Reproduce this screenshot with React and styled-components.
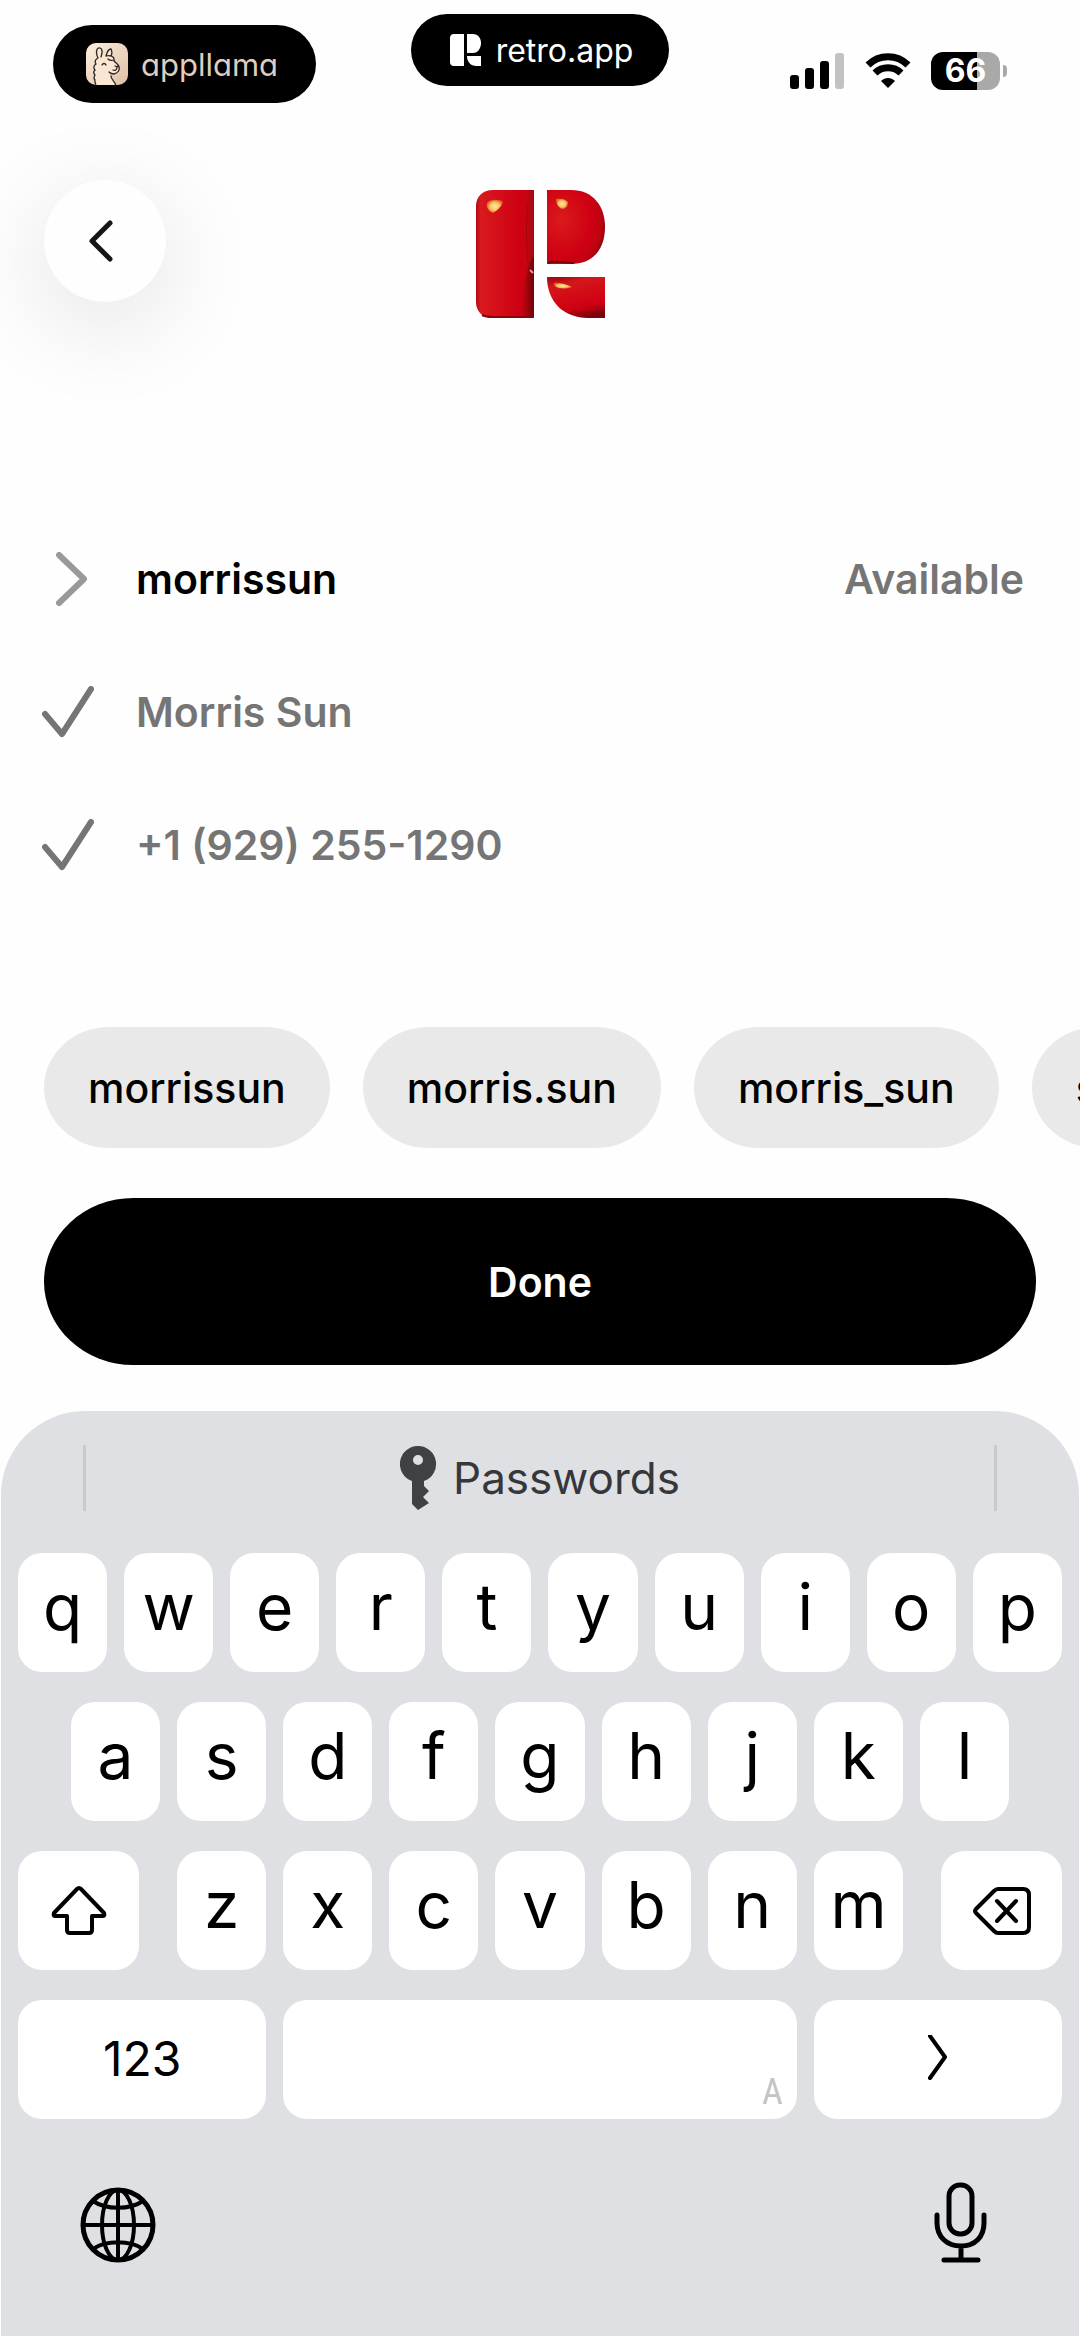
import React, { useState } from "react";
import styled, { createGlobalStyle } from "styled-components";

const suggestions = ["morrissun", "morris.sun", "morris_sun", "sun.morris"];

export default function App() {
  const [username, setUsername] = useState("morrissun");

  const type = (letter) => setUsername(username + letter);

  return (
    <Page>
      <GlobalStyle />
      <StatusBar>
        <BrandPill>
          <LlamaIcon />
          <span>appllama</span>
        </BrandPill>
        <Island>
          <RetroMark />
          <span>retro.app</span>
        </Island>
        <StatusIcons>
          <SignalIcon />
          <WifiIcon />
          <Battery>
            <BatteryLevel>66</BatteryLevel>
            <BatteryNub />
          </Battery>
        </StatusIcons>
      </StatusBar>

      <Nav>
        <BackButton aria-label="Back">
          <svg width="24" height="42" viewBox="0 0 24 42">
            <path d="M21 3L3 21L21 39" fill="none" stroke="#161616" strokeWidth="5" strokeLinecap="round" strokeLinejoin="round" />
          </svg>
        </BackButton>
        <RetroLogo />
      </Nav>

      <Details>
        <Row>
          <PromptIcon />
          <NameInput
            type="text"
            aria-label="Username"
            value={username}
            onChange={(e) => setUsername(e.target.value)}
          />
          <span>Available</span>
        </Row>
        <Row>
          <CheckIcon />
          <span>Morris Sun</span>
        </Row>
        <Row>
          <CheckIcon />
          <span>+1 (929) 255-1290</span>
        </Row>
      </Details>

      <Chips>
        {suggestions.map((name) => (
          <Chip key={name} onClick={() => setUsername(name)}>
            {name}
          </Chip>
        ))}
      </Chips>
      <DoneButton>Done</DoneButton>

      <Keyboard>
        <SuggestBar>
          <Divider />
          <PasswordsButton>
            <KeyIcon />
            Passwords
          </PasswordsButton>
          <Divider />
        </SuggestBar>
        <Keys>
          <KeyRow>
            {[..."qwertyuiop"].map((l) => (
              <Key key={l} onClick={() => type(l)}>{l}</Key>
            ))}
          </KeyRow>
          <KeyRow $inset>
            {[..."asdfghjkl"].map((l) => (
              <Key key={l} onClick={() => type(l)}>{l}</Key>
            ))}
          </KeyRow>
          <KeyRow $spread>
            <ControlKey $grow={121} aria-label="Shift">
              <ShiftIcon />
            </ControlKey>
            <LetterGroup>
              {[..."zxcvbnm"].map((l) => (
                <Key key={l} onClick={() => type(l)}>{l}</Key>
              ))}
            </LetterGroup>
            <ControlKey $grow={121} aria-label="Delete" onClick={() => setUsername(username.slice(0, -1))}>
              <DeleteIcon />
            </ControlKey>
          </KeyRow>
          <KeyRow>
            <ControlKey $grow={248}>123</ControlKey>
            <SpaceKey $grow={513} aria-label="Space">
              <span>A</span>
            </SpaceKey>
            <ControlKey $grow={248} aria-label="Next">
              <svg width="20" height="48" viewBox="0 0 20 48">
                <path d="M2 1L17 22L2 43" fill="none" stroke="#000" strokeWidth="4" strokeLinecap="round" strokeLinejoin="round" />
              </svg>
            </ControlKey>
          </KeyRow>
        </Keys>
        <BottomBar>
          <PlainButton aria-label="Next keyboard">
            <GlobeIcon />
          </PlainButton>
          <PlainButton aria-label="Dictate">
            <MicIcon />
          </PlainButton>
        </BottomBar>
      </Keyboard>
    </Page>
  );
}

function LlamaIcon() {
  return (
    <svg width="42" height="42" viewBox="0 0 42 42">
      <defs>
        <linearGradient id="sand" x1="0" y1="0" x2="1" y2="1">
          <stop offset="0" stopColor="#fdeee0" />
          <stop offset="1" stopColor="#dfbfa4" />
        </linearGradient>
        <clipPath id="tile">
          <rect width="42" height="42" rx="10" />
        </clipPath>
      </defs>
      <g clipPath="url(#tile)">
        <rect width="42" height="42" fill="url(#sand)" />
        <path
          d="M9 43C11 41 8 39 9 37C7 35 8 34 9 32C7 30 8 28 9 27C7 25 8 22 10 21C8 18 10 16 12 15C9 9 11 4 14 5C17 6 16 11 15 14C17 12 19 12 20 13C21 9 23 6 25 6C26 8 26 11 25 13C28 13 30 15 28 18C30 20 33 22 33 24C34 27 32 30 28 31C26 31 24 30 23 29C24 35 29 37 30 43Z"
          fill="#fbe6d4"
        />
        <path
          d="M9 43C11 41 8 39 9 37C7 35 8 34 9 32C7 30 8 28 9 27C7 25 8 22 10 21C8 18 10 16 12 15C9 9 11 4 14 5C17 6 16 11 15 14M20 13C21 9 23 6 25 6C26 8 26 11 25 13M20 13C23 12 29 13 28 17C25 18 23 17 22 16M28 18C30 20 33 22 33 24C34 27 32 30 28 31C26 31 24 30 23 29M25 33C25 37 29 38 30 43M16 22C17 20 19 20 20 22M29 23L31 24L32 23M31 24C31 27 29 28 27 27"
          fill="none"
          stroke="#2a2522"
          strokeWidth="1.3"
          strokeLinecap="round"
        />
      </g>
    </svg>
  );
}

function RetroMark() {
  return (
    <svg width="32" height="32" viewBox="0 0 32 32" fill="#fff">
      <path d="M4 0H14V32H4Q0 32 0 28V4Q0 0 4 0Z" />
      <path d="M17 0H23C28 0 31 4 31 9C31 14 28 19 23 19H17Z" />
      <path d="M17 22H31V32H26C21 32 17 28 17 22Z" />
    </svg>
  );
}

function RetroLogo() {
  return (
    <Logo viewBox="0 0 129 128" role="img" aria-label="Retro">
      <defs>
        <linearGradient id="stem" x1="0" y1="0" x2="1" y2="0">
          <stop offset="0" stopColor="#b00a14" />
          <stop offset="0.08" stopColor="#d91a1e" />
          <stop offset="0.75" stopColor="#cf0013" />
          <stop offset="0.88" stopColor="#c3060f" />
          <stop offset="1" stopColor="#a50713" />
        </linearGradient>
        <radialGradient id="bowl" cx="0.25" cy="0.4" r="0.85">
          <stop offset="0" stopColor="#da1b1b" />
          <stop offset="0.6" stopColor="#cf0013" />
          <stop offset="0.82" stopColor="#bd0310" />
          <stop offset="1" stopColor="#5c0208" />
        </radialGradient>
        <linearGradient id="leg" x1="0.3" y1="0" x2="0.6" y2="1">
          <stop offset="0" stopColor="#a80a12" />
          <stop offset="0.15" stopColor="#d5161b" />
          <stop offset="0.75" stopColor="#cf0013" />
          <stop offset="1" stopColor="#7c030b" />
        </linearGradient>
        <linearGradient id="fold" x1="0" y1="0" x2="1" y2="0">
          <stop offset="0" stopColor="#6d0207" stopOpacity="0" />
          <stop offset="1" stopColor="#5a0206" stopOpacity="0.75" />
        </linearGradient>
        <radialGradient id="shine">
          <stop offset="0" stopColor="#ffe99a" />
          <stop offset="0.6" stopColor="#fbc362" />
          <stop offset="1" stopColor="#e0642d" />
        </radialGradient>
      </defs>
      <path d="M17 0H58V128H17C6 128 0 121 0 112V16C0 7 6 0 17 0Z" fill="url(#stem)" />
      <path d="M55 70C51 80 47 95 45 126L58 127V66Z" fill="url(#fold)" />
      <path d="M52 14C50 30 50 50 52 72L55 82" fill="none" stroke="#a3060d" strokeWidth="1" />
      <path d="M6 125Q10 127 17 127H57" fill="none" stroke="#8b030a" strokeWidth="2" />
      <path d="M54 80L57 83" stroke="#e59a96" strokeWidth="2" />
      <path d="M71 0H95C117 0 129 16 129 37C129 59 117 74 95 74H71Z" fill="url(#bowl)" />
      <path d="M72 73C80 70 92 73 98 73" fill="none" stroke="#7a0308" strokeWidth="2" />
      <path d="M71 87H129V128H112C88 128 71 112 71 87Z" fill="url(#leg)" />
      <path d="M11 13C14 9 24 9 27 12C25 17 22 20 17 23C12 21 10 17 11 13Z" fill="url(#shine)" />
      <path d="M80 9C84 8 90 9 92 12C92 16 90 19 86 19C82 17 80 14 80 9Z" fill="url(#shine)" />
      <path d="M78 93C84 92 91 95 96 97C92 99 85 99 82 98C79 97 78 95 78 93Z" fill="url(#shine)" />
    </Logo>
  );
}

function SignalIcon() {
  return (
    <svg width="55" height="36" viewBox="0 0 55 36">
      <rect x="0" y="22" width="9" height="14" rx="3" />
      <rect x="15" y="15" width="9" height="21" rx="3" />
      <rect x="30" y="8" width="9" height="28" rx="3" />
      <rect x="45" y="0" width="9" height="36" rx="3" fill="#c2c2c2" />
    </svg>
  );
}

function WifiIcon() {
  return (
    <svg width="46" height="36" viewBox="0 0 46 36">
      <path d="M3 12C14 1 32 1 43 12" fill="none" stroke="#000" strokeWidth="7" />
      <path d="M10 20C17 13 29 13 36 20" fill="none" stroke="#000" strokeWidth="7" />
      <path d="M16 28C20 24 26 24 30 28L23 35Z" />
    </svg>
  );
}

function PromptIcon() {
  return (
    <svg width="52" height="54" viewBox="0 0 52 54">
      <path d="M17 3L42 27L17 51" fill="none" stroke="#999" strokeWidth="6" strokeLinecap="round" strokeLinejoin="round" />
    </svg>
  );
}

function CheckIcon() {
  return (
    <svg width="52" height="52" viewBox="0 0 52 52">
      <path d="M3 28L20 48L49 3" fill="none" stroke="#757575" strokeWidth="6" strokeLinecap="round" strokeLinejoin="round" />
    </svg>
  );
}

function KeyIcon() {
  return (
    <svg width="37" height="64" viewBox="0 0 37 64" fill="#404145">
      <path
        fillRule="evenodd"
        d="M18 0A18 18 0 0 1 24 35V40L29 45L23 51L29 57L18 64L12 58V35A18 18 0 0 1 18 0ZM18 9A5 5 0 1 0 18 19A5 5 0 1 0 18 9Z"
      />
    </svg>
  );
}

function ShiftIcon() {
  return (
    <svg width="56" height="52" viewBox="0 0 56 52">
      <path
        d="M26 5Q28 3 30 5L53 29Q54 32 52 32H41V46Q41 49 38 49H19Q16 49 16 46V32H4Q2 32 3 29Z"
        fill="none"
        stroke="#000"
        strokeWidth="4"
        strokeLinejoin="round"
      />
    </svg>
  );
}

function DeleteIcon() {
  return (
    <svg width="58" height="52" viewBox="0 0 58 52" fill="none" stroke="#000" strokeWidth="4" strokeLinecap="round" strokeLinejoin="round">
      <path d="M25 5H50Q56 5 56 11V43Q56 49 50 49H25Q23 49 21 47L3 29Q1 27 3 25L21 7Q23 5 25 5Z" />
      <path d="M24 17L43 37M43 17L24 37" />
    </svg>
  );
}

function GlobeIcon() {
  return (
    <svg width="76" height="76" viewBox="0 0 76 76" fill="none" stroke="#000" strokeWidth="4">
      <circle cx="38" cy="38" r="35" strokeWidth="5" />
      <ellipse cx="38" cy="38" rx="16" ry="35" />
      <path d="M38 3V73M3 38H73M13 14C26 23 50 23 63 14M13 62C26 53 50 53 63 62" />
    </svg>
  );
}

function MicIcon() {
  return (
    <svg width="54" height="82" viewBox="0 0 54 82" fill="none" stroke="#000" strokeWidth="5" strokeLinecap="round">
      <rect x="15" y="4" width="23" height="49" rx="11" />
      <path d="M3 34V42C3 56 13 65 27 65C41 65 50 56 50 42V34M27 65V79M10 79H44" />
    </svg>
  );
}

const GlobalStyle = createGlobalStyle`
  * {
    box-sizing: border-box;
  }

  body {
    margin: 0;
    background: #fefefe;
    font-family: Inter, "Liberation Sans", sans-serif;
  }

  button, input {
    margin: 0;
    padding: 0;
    border: none;
    background: none;
    font-family: inherit;
    color: inherit;
  }

  button {
    cursor: pointer;
  }

  svg {
    display: block;
    flex-shrink: 0;
  }
`;

const Page = styled.main`
  display: flex;
  flex-direction: column;
  min-height: 100vh;
  overflow: hidden;
  color: #000;
`;

const StatusBar = styled.header`
  display: grid;
  grid-template-columns: 1fr auto 1fr;
  align-items: start;
  height: 104px;
  padding: 14px 73px 0 53px;
`;

const BrandPill = styled.div`
  display: flex;
  align-items: center;
  justify-self: start;
  gap: 13px;
  height: 78px;
  margin-top: 11px;
  padding: 0 38px 0 33px;
  border-radius: 39px;
  background: #000;
  color: #dfcdbe;
  font-size: 31px;
  font-feature-settings: "cv11";
`;

const Island = styled.div`
  display: flex;
  align-items: center;
  gap: 14px;
  height: 72px;
  margin-left: 20px;
  padding: 0 36px 0 39px;
  border-radius: 36px;
  background: #000;
  color: #fff;
  font-size: 32px;
`;

const StatusIcons = styled.div`
  display: flex;
  align-items: center;
  justify-self: end;
  gap: 20px;
  margin-top: 38px;
`;

const Battery = styled.div`
  display: flex;
  align-items: center;
  gap: 3px;
`;

const BatteryLevel = styled.span`
  width: 69px;
  height: 38px;
  border-radius: 12px;
  background: linear-gradient(to right, #000 66%, #a9a9a9 66%);
  color: #fff;
  font-size: 32px;
  font-weight: 700;
  line-height: 38px;
  text-align: center;
`;

const BatteryNub = styled.i`
  width: 4px;
  height: 12px;
  border-radius: 0 4px 4px 0;
  background: #a9a9a9;
`;

const Nav = styled.nav`
  display: grid;
  grid-template-columns: 1fr auto 1fr;
  align-items: start;
  padding: 76px 44px 0;
`;

const BackButton = styled.button`
  display: flex;
  align-items: center;
  justify-content: center;
  width: 122px;
  height: 122px;
  padding-right: 8px;
  border-radius: 50%;
  background: #fefefe;
  box-shadow: 0 22px 100px rgba(0, 0, 0, 0.12);
`;

const Logo = styled.svg`
  width: 129px;
  height: 128px;
  margin-top: 10px;
`;

const Details = styled.section`
  margin-top: 194px;
`;

const Row = styled.div`
  display: flex;
  align-items: center;
  gap: 42px;
  height: 133px;
  padding: 0 56px 0 42px;
  color: #757575;
  font-size: 41px;
  font-weight: 600;
`;

const NameInput = styled.input`
  flex: 1;
  min-width: 0;
  outline: none;
  color: #000;
  font-size: 41px;
  font-weight: 600;
`;

const Chips = styled.div`
  display: flex;
  gap: 33px;
  margin-top: 116px;
  padding-left: 44px;
  overflow: hidden;
`;

const Chip = styled.button`
  flex-shrink: 0;
  height: 121px;
  padding: 0 44px;
  border-radius: 66px / 61px;
  background: #e9e9e9;
  font-size: 41px;
  font-weight: 500;
`;

const DoneButton = styled.button`
  height: 167px;
  margin: 50px 44px 46px;
  border-radius: 90px / 84px;
  background: #000;
  color: #fff;
  font-size: 41px;
  font-weight: 600;
`;

const Keyboard = styled.section`
  flex: 1;
  margin: 0 1px;
  padding: 34px 17px 0;
  border-radius: 84px 84px 0 0;
  background: #dfe0e4;
`;

const SuggestBar = styled.div`
  display: flex;
  align-items: center;
  justify-content: space-between;
  height: 66px;
  margin: 0 65px 42px;
`;

const Divider = styled.span`
  width: 3px;
  height: 66px;
  background: #c9cace;
`;

const PasswordsButton = styled.button`
  display: flex;
  align-items: center;
  gap: 16px;
  color: #36373b;
  font-size: 44px;
`;

const Keys = styled.div`
  display: grid;
  gap: 30px;
`;

const KeyRow = styled.div`
  display: flex;
  gap: ${(props) => (props.$spread ? "38px" : "17px")};
  padding: 0 ${(props) => (props.$inset ? "53px" : "0")};
`;

const LetterGroup = styled.div`
  display: flex;
  flex: 726 1 0;
  gap: 17px;
`;

const Key = styled.button`
  flex: 1 1 0;
  min-width: 0;
  height: 119px;
  padding-bottom: 12px;
  border-radius: 24px;
  background: #fff;
  font-size: 64px;
`;

const ControlKey = styled.button`
  display: flex;
  align-items: center;
  justify-content: center;
  flex: ${(props) => props.$grow} 1 0;
  min-width: 0;
  height: 119px;
  padding-bottom: 2px;
  border-radius: 24px;
  background: #fff;
  font-size: 48px;
`;

const SpaceKey = styled(ControlKey)`
  align-items: flex-end;
  justify-content: flex-end;
  color: #c4c4c4;
  font-family: "Liberation Sans Narrow", "Roboto Condensed", Roboto, sans-serif;
  font-size: 36px;

  span {
    margin: 0 14px 4px 0;
  }
`;

const BottomBar = styled.div`
  display: flex;
  align-items: flex-end;
  justify-content: space-between;
  padding: 62px 74px 72px 62px;
`;

const PlainButton = styled.button`
  display: flex;
`;
